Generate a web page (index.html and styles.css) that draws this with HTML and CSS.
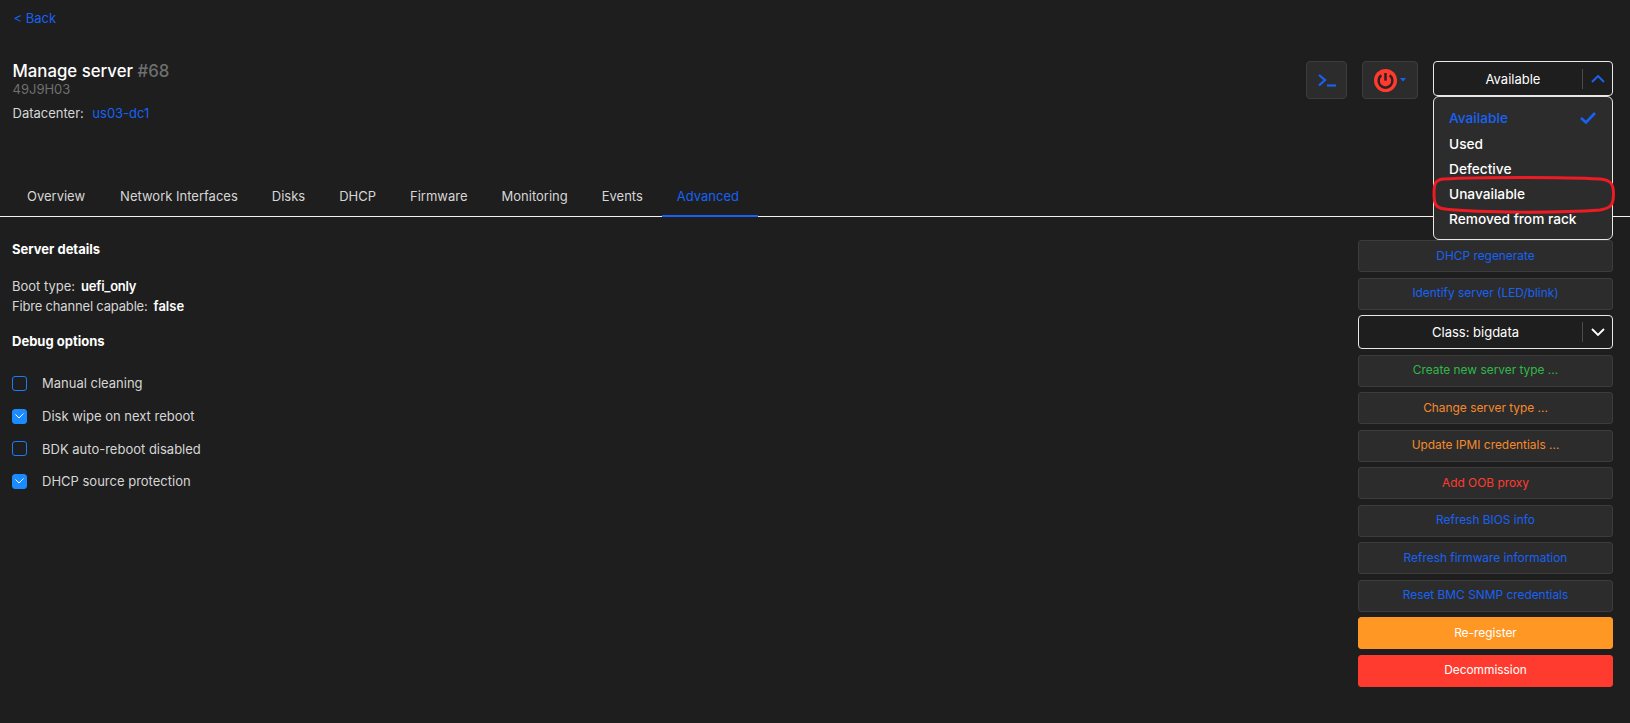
FILE: index.html
```html
<!DOCTYPE html>
<html lang="en">
<head>
<meta charset="utf-8">
<title>Manage server #68</title>
<link rel="stylesheet" href="styles.css">
</head>
<body>
<div class="top">
  <a class="back">&lt; Back</a>
  <header class="head">
    <div class="head-info">
      <h1 class="title">Manage server <span class="muted">#68</span></h1>
      <div class="serial">49J9H03</div>
      <div class="dc"><span>Datacenter:</span><a class="link">us03-dc1</a></div>
    </div>
    <div class="head-actions">
      <button class="icon-btn term">
        <svg width="18" height="13" viewBox="0 0 18 13"><path d="M1 1l6 5-6 5.5" fill="none" stroke="#1762f5" stroke-width="2.2"/><path d="M9 11.5h9" stroke="#1762f5" stroke-width="2.2"/></svg>
      </button>
      <button class="icon-btn power">
        <svg width="23" height="23" viewBox="0 0 24 24"><circle cx="12" cy="12" r="12" fill="#ff3b30"/><path d="M7.6 6.6a7.2 7.2 0 1 0 8.8 0" fill="none" stroke="#2a2120" stroke-width="2.6"/><path d="M12 4.2v8" stroke="#2a2120" stroke-width="2.6"/></svg>
        <svg class="caret" width="6" height="4" viewBox="0 0 6 4"><path d="M0 0h6L3 3.5z" fill="#1762f5"/></svg>
      </button>
      <div class="status">
        <div class="select open">
          <span class="select-label">Available</span>
          <span class="select-sep"></span>
          <svg width="14" height="8" viewBox="0 0 14 8"><path d="M1 7l6-6 6 6" fill="none" stroke="#1762f5" stroke-width="2"/></svg>
        </div>
        <ul class="menu">
          <li class="menu-item active">Available
            <svg width="16" height="12" viewBox="0 0 16 12"><path d="M1 6l5 4.5 9-9.5" fill="none" stroke="#1762f5" stroke-width="2.6"/></svg>
          </li>
          <li class="menu-item">Used</li>
          <li class="menu-item">Defective</li>
          <li class="menu-item">Unavailable</li>
          <li class="menu-item">Removed from rack</li>
        </ul>
        <svg class="ring" width="186" height="38" viewBox="0 0 186 38"><path d="M12 3C50 1 130 1 169 3 180 4 182.500 8 182.500 18 182.500 29 180 32 169 34 130 37 50 37 14 33 5 32 3 29 3 18 3 8 4 4 12 3Z" fill="none" stroke="#ed1c24" stroke-width="3"/></svg>
      </div>
    </div>
  </header>
  <nav class="tabs">
    <a class="tab">Overview</a>
    <a class="tab">Network Interfaces</a>
    <a class="tab">Disks</a>
    <a class="tab">DHCP</a>
    <a class="tab">Firmware</a>
    <a class="tab">Monitoring</a>
    <a class="tab">Events</a>
    <a class="tab current">Advanced</a>
  </nav>
</div>
<main class="content">
  <section class="details">
    <h2 class="section-title">Server details</h2>
    <div class="kv first"><span>Boot type:</span><b class="tight-value">uefi_only</b></div>
    <div class="kv"><span class="tight">Fibre channel capable:</span><b>false</b></div>
    <h2 class="section-title debug">Debug options</h2>
    <label class="check"><span class="box"></span>Manual cleaning</label>
    <label class="check"><span class="box on"><svg width="9" height="6" viewBox="0 0 9 6"><path d="M.5 1.500 4 5 8.500 .5" fill="none" stroke="#fff" stroke-width="1"/></svg></span>Disk wipe on next reboot</label>
    <label class="check"><span class="box"></span>BDK auto-reboot disabled</label>
    <label class="check"><span class="box on"><svg width="9" height="6" viewBox="0 0 9 6"><path d="M.5 1.500 4 5 8.500 .5" fill="none" stroke="#fff" stroke-width="1"/></svg></span>DHCP source protection</label>
  </section>
  <aside class="actions">
    <button class="btn blue">DHCP regenerate</button>
    <button class="btn blue">Identify server (LED/blink)</button>
    <div class="select class-select">
      <span class="select-label">Class: bigdata</span>
      <span class="select-sep"></span>
      <svg width="14" height="8" viewBox="0 0 14 8"><path d="M1 1l6 6 6-6" fill="none" stroke="#fff" stroke-width="1.8"/></svg>
    </div>
    <button class="btn green">Create new server type ...</button>
    <button class="btn orange">Change server type ...</button>
    <button class="btn orange">Update IPMI credentials ...</button>
    <button class="btn red">Add OOB proxy</button>
    <button class="btn blue">Refresh BIOS info</button>
    <button class="btn blue">Refresh firmware information</button>
    <button class="btn blue">Reset BMC SNMP credentials</button>
    <button class="btn solid-orange">Re-register</button>
    <button class="btn solid-red">Decommission</button>
  </aside>
</main>
</body>
</html>
```
FILE: styles.css
```css
* { box-sizing: border-box; }
html, body { height: 100%; }
body {
  margin: 0;
  background: #1e1e1e;
  color: #d6d6d6;
  font-family: Inter, "Liberation Sans", sans-serif;
  font-size: 13px;
  line-height: 16px;
  overflow: hidden;
}
a { color: #1762f5; }
h1, h2, ul { margin: 0; padding: 0; list-style: none; }
button { font-family: inherit; font-size: 12px; cursor: pointer; }

.back { display: block; padding: 10px 0 0 13.500px; font-size: 13px; color: #1762f5; }

.head { display: flex; justify-content: space-between; align-items: flex-start; padding: 34px 17px 0 12.500px; height: 149px; }
.title { font-size: 16.8px; line-height: 22px; font-weight: 500; color: #fff; }
.muted { color: #6f6f6f; }
.serial { font-size: 13px; line-height: 15px; color: #6f6f6f; }
.dc { display: flex; gap: 8.500px; margin-top: 8px; }
.link { color: #1762f5; }

.head-actions { display: flex; align-items: flex-start; margin-top: 1px; }
.icon-btn {
  display: flex; align-items: center; justify-content: center;
  height: 38px; border: 1px solid #3c3c3c; border-radius: 4px; background: #2d2c2c; padding: 0;
}
.term { width: 41px; }
.power { width: 56px; margin-left: 15px; gap: 3px; }
.status { position: relative; width: 180px; margin-left: 15px; }

.select {
  display: flex; align-items: center; height: 35px; padding: 0 7px 0 10px;
  border: 1px solid #e8e8e8; border-radius: 4px; background: #1e1e1e; color: #fff; font-size: 13px;
}
.select-label { flex: 1; text-align: center; }
.select-sep { width: 1px; height: 20px; background: #4a4a4a; margin-right: 8px; }

.menu {
  position: absolute; top: 35px; left: 0; right: 0; z-index: 2;
  height: 144px; padding: 9px 0 0;
  background: #2d2c2c; border: 1px solid #e8e8e8; border-radius: 6px;
}
.menu-item {
  display: flex; justify-content: space-between; align-items: center;
  height: 25px; padding: 0 16px 0 15px; font-size: 13.7px; font-weight: 500; color: #fff;
}
.menu-item.active { color: #1762f5; padding-bottom: 2px; }
.ring { position: absolute; left: -2px; top: 115px; z-index: 3; }

.tabs { display: flex; border-bottom: 1px solid #f2f2f2; height: 42px; }
.tab { position: relative; display: flex; align-items: center; padding: 0 17px; color: #d6d6d6; font-size: 13px; }
.tab:first-child { margin-left: 12px; padding-left: 15px; padding-right: 18px; }
.tab.current { color: #1762f5; margin-left: 2px; padding-right: 19px; padding-left: 15px; }
.tab.current::after { content: ""; position: absolute; left: 0; right: 0; bottom: -1px; height: 2px; background: #1762f5; }

.content { display: flex; justify-content: space-between; padding: 23px 17px 0 12px; }
.details { padding-top: 1px; }
.section-title { font-size: 13px; line-height: 16px; font-weight: 700; color: #fff; }
.debug { margin-top: 17px; }
.kv { display: flex; gap: 6px; height: 19.500px; align-items: center; }
.kv.first { margin-top: 19.500px; }
.kv b { font-weight: 600; color: #fff; }
.tight { letter-spacing: -0.18px; }
.tight-value { letter-spacing: -0.25px; }

.check { display: flex; align-items: center; height: 32.7px; color: #d6d6d6; }
.check:first-of-type { margin-top: 18.5px; }
.box {
  display: flex; align-items: center; justify-content: center;
  width: 15px; height: 15px; margin-right: 15px;
  border: 1px solid #1a7cf5; border-radius: 3px;
}
.box.on { background: #1a8cff; border-color: #1a8cff; }

.actions { display: flex; flex-direction: column; gap: 5.5px; width: 255px; }
.btn {
  height: 32px; padding: 0 0 2px; border: 1px solid #3c3c3c; border-radius: 3px; background: #2d2c2c; font-size: 11.9px;
}
.blue { color: #1762f5; }
.green { color: #2fb84a; }
.orange { color: #f58a2a; }
.red { color: #ff3b30; }
.solid-orange { background: #ff9725; border-color: #ff9725; color: #fff; }
.solid-red { background: #ff3b30; border-color: #ff3b30; color: #fff; }
.class-select { height: 34px; font-size: 13px; }
```
